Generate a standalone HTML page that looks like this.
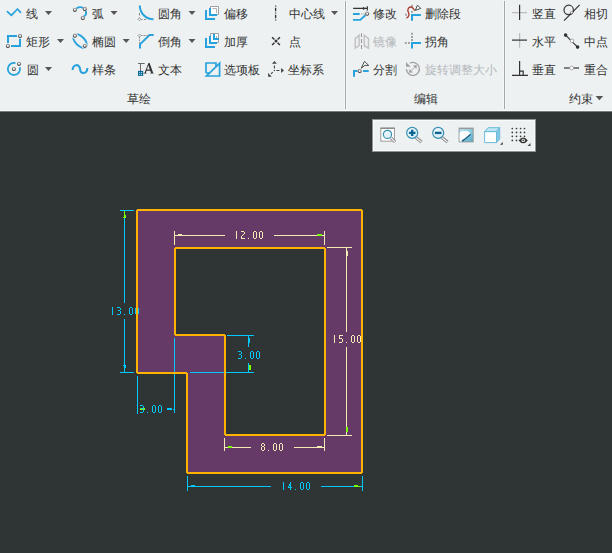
<!DOCTYPE html>
<html><head><meta charset="utf-8"><style>
html,body{margin:0;padding:0;width:612px;height:553px;overflow:hidden;background:#2f3535}
#rib{position:absolute;left:0;top:0;width:612px;height:111px;background:#edf1f2}
.t{position:absolute;font-family:"Liberation Sans",sans-serif;font-size:12px;line-height:16px;white-space:nowrap}
svg{position:absolute;left:0;top:0}
</style></head><body>
<div id="rib"></div>
<svg width="612" height="553" viewBox="0 0 612 553">
<rect x="0" y="110" width="612" height="1" fill="#f7f9f9"/>
<rect x="0" y="111" width="612" height="1" fill="#767b7c"/>
<rect x="344" y="1" width="3" height="108" fill="#f5f7f8"/><rect x="345" y="1" width="1" height="108" fill="#a4a8aa"/>
<rect x="503" y="1" width="3" height="108" fill="#f5f7f8"/><rect x="504" y="1" width="1" height="108" fill="#a4a8aa"/>
<path d="M45 11h7l-3.5 4z" fill="#555"/><path d="M110.5 11h7l-3.5 4z" fill="#555"/><path d="M188.5 11h7l-3.5 4z" fill="#555"/><path d="M331 11h7l-3.5 4z" fill="#555"/><path d="M57 39h7l-3.5 4z" fill="#555"/><path d="M122.7 39h7l-3.5 4z" fill="#555"/><path d="M188.5 39h7l-3.5 4z" fill="#555"/><path d="M45 67h7l-3.5 4z" fill="#555"/><path d="M595.6 95.9h7.6l-3.8 4.4z" fill="#555"/>

<defs>
<radialGradient id="nd" cx="0.45" cy="0.4" r="0.6"><stop offset="0.3" stop-color="#ffffff"/><stop offset="0.62" stop-color="#c4c4c4"/><stop offset="1" stop-color="#3c3c3c"/></radialGradient>
<linearGradient id="ndr" x1="0" y1="0" x2="0" y2="1"><stop offset="0" stop-color="#a0a0a0"/><stop offset="1" stop-color="#3a3a3a"/></linearGradient>
<linearGradient id="rg" x1="0" y1="0" x2="1" y2="1"><stop offset="0" stop-color="#bfeaf8"/><stop offset="1" stop-color="#58abc8"/></linearGradient>
<linearGradient id="lens" x1="0" y1="0" x2="1" y2="1"><stop offset="0" stop-color="#f4fbfe"/><stop offset="1" stop-color="#cfeaf5"/></linearGradient>
</defs>
<!-- line -->
<polyline points="7.4,11.6 11.4,15.4 17.4,9 20.5,12.3" fill="none" stroke="#28a2dc" stroke-width="1.7" stroke-linecap="round" stroke-linejoin="round"/>
<!-- rect -->
<path d="M7 36H17M8 35V43M20 38.7V47M11 46H21" fill="none" stroke="#28a2dc" stroke-width="2"/>
<circle cx="20" cy="35.9" r="1.55" fill="#fafafa" stroke="url(#ndr)" stroke-width="1.1"/>
<circle cx="7.9" cy="45.9" r="1.55" fill="#fafafa" stroke="url(#ndr)" stroke-width="1.1"/>
<!-- circle -->
<path d="M19.79 67.32A6.1 6.1 0 1 1 15.48 63.01" fill="none" stroke="#28a2dc" stroke-width="1.8"/>
<circle cx="13.9" cy="68.9" r="1.55" fill="#fafafa" stroke="url(#ndr)" stroke-width="1.1"/>
<circle cx="19" cy="63.8" r="1.55" fill="#fafafa" stroke="url(#ndr)" stroke-width="1.1"/>
<!-- arc -->
<path d="M76.5 8.4Q80 6 83.2 8M85.6 10.8Q87.2 14.5 83.8 16.5" fill="none" stroke="#28a2dc" stroke-width="1.8"/>
<circle cx="74.9" cy="9.8" r="1.55" fill="#fafafa" stroke="url(#ndr)" stroke-width="1.1"/>
<circle cx="84.8" cy="8.9" r="1.55" fill="#fafafa" stroke="url(#ndr)" stroke-width="1.1"/>
<circle cx="82.8" cy="17.9" r="1.55" fill="#fafafa" stroke="url(#ndr)" stroke-width="1.1"/>
<!-- ellipse -->
<ellipse cx="80" cy="41" rx="8.6" ry="4.6" transform="rotate(45 80 41)" fill="none" stroke="#28a2dc" stroke-width="1.8"/>
<circle cx="74.9" cy="35.7" r="2.9" fill="#edf1f2"/>
<circle cx="84.8" cy="45.8" r="2.9" fill="#edf1f2"/>
<circle cx="74.9" cy="35.7" r="1.55" fill="#fafafa" stroke="url(#ndr)" stroke-width="1.1"/>
<circle cx="84.8" cy="45.8" r="1.55" fill="#fafafa" stroke="url(#ndr)" stroke-width="1.1"/>
<!-- spline -->
<path d="M72.6 70C73 64 79.5 63.5 80 69C80.5 74.5 87 74.5 87.4 68" fill="none" stroke="#28a2dc" stroke-width="2.1"/>
<!-- fillet -->
<path d="M139.8 5.4A13.7 13.9 0 0 0 153.5 19.3" fill="none" stroke="#28a2dc" stroke-width="2"/>
<path d="M139.5 13V15.5M139.5 17V17.6M141 19.5H142.5M144 19.5H146" fill="none" stroke="#8a8a8a" stroke-width="1"/>
<path d="M139.5 17.8l1.5 1.5-1.5 1.5-1.5-1.5z" fill="none" stroke="#8a8a8a" stroke-width="0.8"/>
<!-- chamfer -->
<path d="M140 48.5V44.3L149.5 35H153.7" fill="none" stroke="#28a2dc" stroke-width="2"/>
<path d="M141 35.5H142.5M143.5 35.5H145.5M146.5 35.5H148.5M139.5 37V38.5M139.5 39.5V41M139.5 42V43.5" fill="none" stroke="#8a8a8a" stroke-width="1"/>
<path d="M139.5 34l1.5 1.5-1.5 1.5-1.5-1.5z" fill="none" stroke="#8a8a8a" stroke-width="0.8"/>
<!-- text icon -->
<path d="M138 63.5H144.7M140.5 63.5V71" stroke="#6a6a6a" stroke-width="1" fill="none"/>
<path fill-rule="evenodd" fill="#333" d="M143.6 73.5H146.6V72.9L145.9 72.7L146.5 70.7H150.3L151 72.7L150.3 72.9V73.5H153.6V72.9L153.1 72.7L149.6 63H148.4L144.6 72.7L143.6 72.9Z M146.9 69.5H149.8L148.3 65.3Z"/>
<rect x="138" y="70.9" width="5.2" height="5" fill="#0b6a96"/>
<rect x="139.2" y="72.1" width="1" height="1" fill="#bfe6f7"/><rect x="141" y="72.1" width="1" height="1" fill="#bfe6f7"/>
<rect x="139.2" y="73.9" width="1" height="1" fill="#bfe6f7"/><rect x="141" y="73.9" width="1" height="1" fill="#bfe6f7"/>
<!-- offset -->
<path d="M210.5 6.5H218.5V14.5H210.5Z" fill="#fff" stroke="#a0a0a0" stroke-width="1"/><path d="M212.5 8.5H216.5V13" fill="none" stroke="#b0b0b0" stroke-width="1"/>
<path d="M206 10V19H215M210 8V15H217" fill="none" stroke="#28a2dc" stroke-width="2"/>
<!-- thicken -->
<path d="M210.5 33.5H218.5V42.5H210.5Z" fill="#fff" stroke="#a0a0a0" stroke-width="1"/><path d="M216.5 36V40" fill="none" stroke="#b0b0b0" stroke-width="1"/>
<path d="M206 38V47H215M210 36V43H217M214 34V39H219" fill="none" stroke="#28a2dc" stroke-width="2"/>
<!-- palette -->
<path d="M206 73V63H216V66.5M206 73H210.3" fill="none" stroke="#28a2dc" stroke-width="1.7"/>
<path d="M219.6 63.3V76H206.5Z" fill="none" stroke="#28a2dc" stroke-width="1.7" stroke-linejoin="miter"/>
<!-- centerline -->
<path d="M275.6 5.5V6.6M275.6 7.7V11.2M275.6 12.5V13.6M275.6 14.7V18.2M275.6 19.5V20.6" stroke="#333" stroke-width="1.3" fill="none"/>
<!-- point -->
<path d="M272.1 37.2l2.3 2.3M279.9 37.2l-2.3 2.3M272.1 45l2.3-2.3M279.9 45l-2.3-2.3" stroke="#333" stroke-width="1.5"/>
<circle cx="276" cy="41.1" r="1.5" fill="#333"/>
<!-- csys -->
<path d="M274.4 65.4V68.4M276.4 70.5H279.4M272.7 72.1L271 73.8" stroke="#444" stroke-width="1.1" fill="none"/>
<circle cx="274.4" cy="70.5" r="0.7" fill="#444"/>
<path d="M274.4 61L272 63.8H276.9Z M284 70.5L281.1 68V72.9Z M268.1 73V76.7H271.8Z" fill="#444"/>
<!-- modify -->
<path d="M353.2 8.4H367.7M367.3 6.2V10.6M363.6 7V9.8" stroke="#333" stroke-width="1.2" fill="none"/>
<path d="M353 14H359.7M353 19.9H360.3L365.4 15.2" stroke="#28a2dc" stroke-width="1.9" fill="none"/>
<path d="M361 14H361.8M362.6 14H363.4M364.2 14H365" stroke="#999" stroke-width="1"/>
<circle cx="367.1" cy="13.7" r="1.55" fill="#fafafa" stroke="url(#ndr)" stroke-width="1.1"/>
<!-- delete seg -->
<rect x="405" y="13.7" width="2" height="2" fill="#aaa"/><rect x="411" y="4.8" width="2" height="2" fill="#aaa"/><rect x="411" y="10.9" width="2" height="2" fill="#aaa"/>
<path d="M406.4 18.3C408.5 17 409.8 15.5 408.5 12.5C407 10 408.2 7 411 7C413 7 413.5 9.5 414.7 10.4" stroke="#a8382c" stroke-width="1.3" fill="none"/>
<path d="M417.5 5.2L420.7 8.4 415.3 10.4Z" fill="#fff" stroke="#333" stroke-width="0.9" stroke-linejoin="round"/>
<path d="M412 20.7V15H420.9" stroke="#28a2dc" stroke-width="2" fill="none"/>
<!-- mirror (disabled) -->
<path d="M355.2 38.6V48.1L359.1 45.7V35.2Z M368.5 38.6V48.1L364.3 45.7V35.2Z" fill="none" stroke="#c2c3c4" stroke-width="1.5"/>
<path d="M361.5 33.2V37M361.5 39V43M361.5 45V49" stroke="#9c9c9c" stroke-width="1.1"/>
<!-- corner -->
<g fill="#a4a4a4"><rect x="411" y="32.8" width="2" height="2"/><rect x="411" y="36" width="2" height="2"/><rect x="411" y="39" width="2" height="2"/><rect x="404.8" y="42" width="2" height="2"/><rect x="408" y="42" width="2" height="2"/></g>
<path d="M412 48.5V43H421" stroke="#28a2dc" stroke-width="2" fill="none"/>
<!-- split -->
<path d="M354 76.7V71H357.5M363.1 71H368.7" stroke="#28a2dc" stroke-width="2" fill="none"/>
<circle cx="359.7" cy="70.9" r="1.55" fill="#fafafa" stroke="url(#ndr)" stroke-width="1.1"/>
<path d="M364.5 61.4L368.7 65.4 365 65.3 361.3 68.1Z" fill="#fff" stroke="#333" stroke-width="0.9" stroke-linejoin="round"/>
<!-- rotate resize (disabled) -->
<path d="M406.4 69.1A6.5 6.5 0 1 0 409.8 63.2" fill="none" stroke="#a2a2a2" stroke-width="1.3"/>
<path d="M406 62V66.8H410.8Z" fill="#a2a2a2"/>
<path d="M410.5 71.3L415.3 66.5" stroke="#a2a2a2" stroke-width="1.1" stroke-dasharray="1 0.8"/>
<path d="M409 72.8L409.4 69 413 72.4Z M416.8 65L413 65.4 416.4 69Z" fill="#a2a2a2"/>
<!-- vertical -->
<path d="M512 12.6H527" stroke="#b9bbbc" stroke-width="1.2"/>
<path d="M519.6 4.8V20" stroke="#333" stroke-width="1.2"/>
<!-- horizontal -->
<path d="M519.6 33V47.8" stroke="#b9bbbc" stroke-width="1.2"/>
<path d="M512 40.1H527" stroke="#333" stroke-width="1.2"/>
<!-- perpendicular -->
<path d="M519.6 61V75.3M512 75.3H528M519.6 71.1H523.2V75.3" stroke="#333" stroke-width="1.2" fill="none"/>
<!-- tangent -->
<circle cx="568.7" cy="9.9" r="4.7" fill="none" stroke="#333" stroke-width="1.2"/>
<path d="M564 20.6L579.7 4.8" stroke="#333" stroke-width="1.2"/>
<circle cx="571.6" cy="12.6" r="1.3" fill="#fafafa" stroke="url(#ndr)" stroke-width="0.9"/>
<!-- midpoint -->
<path d="M565.6 35.1L577.6 47.1" stroke="#333" stroke-width="1.2"/>
<circle cx="565.6" cy="35.1" r="1.8" fill="#333"/>
<circle cx="577.6" cy="47.1" r="1.8" fill="#333"/>
<circle cx="572" cy="40.8" r="1.8" fill="#fff" stroke="#9a9a9a" stroke-width="0.8"/>
<!-- coincident -->
<path d="M564 68H579" stroke="#333" stroke-width="1.2"/>
<circle cx="571.6" cy="68" r="1.9" fill="#fff" stroke="#9a9a9a" stroke-width="0.8"/>


<rect x="372" y="119" width="164" height="33" fill="#8c9394"/>
<rect x="373" y="120" width="162" height="31" fill="#f8fafa"/>
<rect x="374" y="121" width="160" height="29" fill="#edf1f2"/>
<!-- zoom fit -->
<rect x="380.3" y="127.4" width="14.6" height="14.3" fill="#fff"/>
<path d="M380.8 141.7V128.4H394.4V141.7" fill="none" stroke="#9a9a9a" stroke-width="1"/>
<path d="M380.3 128.2H394.9" stroke="#8c8c8c" stroke-width="1.6"/>
<path d="M380.8 141.2H392" stroke="#9a9a9a" stroke-width="1"/>
<path d="M391 138L395.1 142" stroke="#777" stroke-width="3"/>
<path d="M391 138L395.1 142" stroke="#f4f4f4" stroke-width="1.3"/>
<circle cx="387.5" cy="134.4" r="4.1" fill="url(#lens)" stroke="#3b8fb2" stroke-width="1.2"/>
<!-- zoom in -->
<path d="M415.9 137.4L421.5 142.2" stroke="#777" stroke-width="3"/>
<path d="M415.9 137.4L421.5 142.2" stroke="#f4f4f4" stroke-width="1.3"/>
<circle cx="412.2" cy="132.9" r="5.5" fill="url(#lens)" stroke="#3b8fb2" stroke-width="1.2"/>
<path d="M408.9 132.9H415.5M412.2 129.8V136" stroke="#0c6592" stroke-width="2.4"/>
<!-- zoom out -->
<path d="M441.9 137.4L447.5 142.2" stroke="#777" stroke-width="3"/>
<path d="M441.9 137.4L447.5 142.2" stroke="#f4f4f4" stroke-width="1.3"/>
<circle cx="438.2" cy="132.9" r="5.5" fill="url(#lens)" stroke="#3b8fb2" stroke-width="1.2"/>
<path d="M434.9 132.9H441.5" stroke="#0c6592" stroke-width="2.4"/>
<!-- repaint -->
<rect x="458.6" y="127.6" width="15.1" height="14.8" fill="#9a9a9a"/>
<rect x="459.6" y="129.2" width="13.1" height="12.2" fill="url(#rg)"/>
<path d="M459.6 141.4V133C461 131 465 130.5 468 131.5C469.5 132 470 132.5 470.3 133.5L463 141.4Z" fill="#fff"/>
<path d="M463 140.8L470.7 134.2" stroke="#145f82" stroke-width="1.2"/>
<path d="M461.6 141.4C461.8 139.8 463 139.3 464.5 139.6L463.3 141.4Z" fill="#145f82"/>
<!-- cube -->
<path d="M484.6 131.6H496.5V142.6H484.6Z" fill="#fff" stroke="#6bbbdc" stroke-width="1"/>
<path d="M484.6 131.6L488.2 127.7H499.7L496.5 131.6Z" fill="#bfe5f4" stroke="#6bbbdc" stroke-width="1" stroke-linejoin="round"/>
<path d="M496.5 131.6L499.7 127.7V138.9L496.5 142.6Z" fill="#86c9e4" stroke="#6bbbdc" stroke-width="1" stroke-linejoin="round"/>
<path d="M502.8 142V144.8H500Z" fill="#444"/>
<!-- grid eye -->
<g fill="#3a3a3a">
<circle cx="512.3" cy="128.5" r="0.85"/><circle cx="516.5" cy="128.5" r="0.85"/><circle cx="520.6" cy="128.5" r="0.85"/><circle cx="524.5" cy="128.5" r="0.85"/>
<circle cx="512.3" cy="132.4" r="0.85"/><circle cx="516.5" cy="132.4" r="0.85"/><circle cx="520.6" cy="132.4" r="0.85"/><circle cx="524.5" cy="132.4" r="0.85"/>
<circle cx="512.3" cy="136.3" r="0.85"/><circle cx="516.5" cy="136.3" r="0.85"/><circle cx="520.6" cy="136.3" r="0.85"/><circle cx="524.5" cy="136.3" r="0.85"/>
<circle cx="512.3" cy="140.4" r="0.85"/><circle cx="516.5" cy="140.4" r="0.85"/>
</g>
<path d="M518.6 140.4Q523.2 134.6 527.8 140.4Q523.2 146.2 518.6 140.4Z" fill="#333"/>
<circle cx="523.2" cy="140.4" r="1.7" fill="#fff"/>
<circle cx="523.2" cy="140.4" r="0.8" fill="#333"/>
<path d="M530.5 143V146H527.5Z" fill="#444"/>

<g shape-rendering="crispEdges">
<path fill="#663a66" fill-rule="evenodd" d="M137 210H362V473H187V373H137Z M175 248H325V435H225V335H175Z"/>
<rect x="120" y="210" width="14" height="1" fill="#00c8ff"/>
<rect x="120" y="372" width="14" height="1" fill="#00c8ff"/>
<rect x="124" y="211" width="1" height="92" fill="#00c8ff"/>
<rect x="124" y="319" width="1" height="53" fill="#00c8ff"/>
<rect x="124" y="211" width="1" height="7" fill="#78ff00"/>
<rect x="125" y="215" width="1" height="3" fill="#78ff00"/>
<rect x="123" y="217" width="1" height="1" fill="#78ff00"/>
<rect x="125" y="365" width="1" height="3" fill="#00c8ff"/><rect x="123" y="365" width="1" height="1" fill="#00c8ff"/>
<rect x="174" y="231" width="1" height="14" fill="#f5ebb4"/>
<rect x="324" y="231" width="1" height="14" fill="#f5ebb4"/>
<rect x="174" y="235" width="51" height="1" fill="#f5ebb4"/>
<rect x="274" y="235" width="51" height="1" fill="#f5ebb4"/>
<rect x="178" y="234" width="4" height="1" fill="#f5ebb4"/>
<rect x="317" y="234" width="5" height="2" fill="#78ff00"/>
<rect x="327" y="247" width="25" height="1" fill="#f5ebb4"/>
<rect x="327" y="435" width="25" height="1" fill="#f5ebb4"/>
<rect x="346" y="247" width="1" height="85" fill="#f5ebb4"/>
<rect x="346" y="347" width="1" height="88" fill="#f5ebb4"/>
<rect x="347" y="251" width="1" height="5" fill="#f5ebb4"/>
<rect x="346" y="427" width="2" height="5" fill="#78ff00"/>
<rect x="227" y="335" width="27" height="1" fill="#00c8ff"/>
<rect x="190" y="372" width="64" height="1" fill="#00c8ff"/>
<rect x="248" y="335" width="1" height="12" fill="#00c8ff"/>
<rect x="248" y="363" width="1" height="10" fill="#00c8ff"/>
<rect x="249" y="338" width="1" height="5" fill="#00c8ff"/>
<rect x="249" y="365" width="2" height="5" fill="#78ff00"/>
<rect x="137" y="376" width="1" height="38" fill="#00c8ff"/>
<rect x="174" y="338" width="1" height="75" fill="#00c8ff"/>
<rect x="167" y="408" width="5" height="2" fill="#00c8ff"/>
<rect x="173" y="409" width="1" height="1" fill="#00c8ff"/>
<rect x="140" y="408" width="5" height="2" fill="#78ff00"/>
<rect x="224" y="438" width="1" height="13" fill="#f5ebb4"/>
<rect x="324" y="438" width="1" height="13" fill="#f5ebb4"/>
<rect x="224" y="447" width="27" height="1" fill="#f5ebb4"/>
<rect x="294" y="447" width="31" height="1" fill="#f5ebb4"/>
<rect x="228" y="446" width="4" height="2" fill="#78ff00"/>
<rect x="317" y="446" width="5" height="1" fill="#f5ebb4"/>
<rect x="187" y="476" width="1" height="15" fill="#00c8ff"/>
<rect x="362" y="476" width="1" height="15" fill="#00c8ff"/>
<rect x="187" y="486" width="84" height="1" fill="#00c8ff"/>
<rect x="321" y="486" width="42" height="1" fill="#00c8ff"/>
<rect x="191" y="485" width="4" height="1" fill="#00c8ff"/>
<rect x="354" y="485" width="4" height="1" fill="#78ff00"/><rect x="354" y="486" width="6" height="1" fill="#78ff00"/>
<path fill="#00c8ff" d="M112 307h1v1h-1zM112 308h1v1h-1zM112 309h1v1h-1zM112 310h1v1h-1zM112 311h1v1h-1zM112 312h1v1h-1zM112 313h1v1h-1zM112 314h1v1h-1zM117 307h3v1h-3zM120 308h1v1h-1zM120 309h1v1h-1zM118 310h2v1h-2zM120 311h1v1h-1zM120 312h1v1h-1zM120 313h1v1h-1zM117 314h3v1h-3zM124 314h1v1h-1zM130 307h2v1h-2zM129 308h1v1h-1zM132 308h1v1h-1zM129 309h1v1h-1zM132 309h1v1h-1zM129 310h1v1h-1zM132 310h1v1h-1zM129 311h1v1h-1zM132 311h1v1h-1zM129 312h1v1h-1zM132 312h1v1h-1zM129 313h1v1h-1zM132 313h1v1h-1zM130 314h2v1h-2zM136 307h2v1h-2zM135 308h1v1h-1zM138 308h1v1h-1zM135 309h1v1h-1zM138 309h1v1h-1zM135 310h1v1h-1zM138 310h1v1h-1zM135 311h1v1h-1zM138 311h1v1h-1zM135 312h1v1h-1zM138 312h1v1h-1zM135 313h1v1h-1zM138 313h1v1h-1zM136 314h2v1h-2z"/>
<path fill="#f5ebb4" d="M236 231h1v1h-1zM236 232h1v1h-1zM236 233h1v1h-1zM236 234h1v1h-1zM236 235h1v1h-1zM236 236h1v1h-1zM236 237h1v1h-1zM236 238h1v1h-1zM241 231h3v1h-3zM244 232h1v1h-1zM244 233h1v1h-1zM243 234h1v1h-1zM242 235h1v1h-1zM241 236h1v1h-1zM241 237h1v1h-1zM241 238h4v1h-4zM248 238h1v1h-1zM254 231h2v1h-2zM253 232h1v1h-1zM256 232h1v1h-1zM253 233h1v1h-1zM256 233h1v1h-1zM253 234h1v1h-1zM256 234h1v1h-1zM253 235h1v1h-1zM256 235h1v1h-1zM253 236h1v1h-1zM256 236h1v1h-1zM253 237h1v1h-1zM256 237h1v1h-1zM254 238h2v1h-2zM260 231h2v1h-2zM259 232h1v1h-1zM262 232h1v1h-1zM259 233h1v1h-1zM262 233h1v1h-1zM259 234h1v1h-1zM262 234h1v1h-1zM259 235h1v1h-1zM262 235h1v1h-1zM259 236h1v1h-1zM262 236h1v1h-1zM259 237h1v1h-1zM262 237h1v1h-1zM260 238h2v1h-2z"/>
<path fill="#f5ebb4" d="M334 335h1v1h-1zM334 336h1v1h-1zM334 337h1v1h-1zM334 338h1v1h-1zM334 339h1v1h-1zM334 340h1v1h-1zM334 341h1v1h-1zM334 342h1v1h-1zM339 335h4v1h-4zM339 336h1v1h-1zM339 337h1v1h-1zM339 338h3v1h-3zM342 339h1v1h-1zM342 340h1v1h-1zM342 341h1v1h-1zM339 342h3v1h-3zM346 342h1v1h-1zM352 335h2v1h-2zM351 336h1v1h-1zM354 336h1v1h-1zM351 337h1v1h-1zM354 337h1v1h-1zM351 338h1v1h-1zM354 338h1v1h-1zM351 339h1v1h-1zM354 339h1v1h-1zM351 340h1v1h-1zM354 340h1v1h-1zM351 341h1v1h-1zM354 341h1v1h-1zM352 342h2v1h-2zM358 335h2v1h-2zM357 336h1v1h-1zM360 336h1v1h-1zM357 337h1v1h-1zM360 337h1v1h-1zM357 338h1v1h-1zM360 338h1v1h-1zM357 339h1v1h-1zM360 339h1v1h-1zM357 340h1v1h-1zM360 340h1v1h-1zM357 341h1v1h-1zM360 341h1v1h-1zM358 342h2v1h-2z"/>
<path fill="#00c8ff" d="M238 351h3v1h-3zM241 352h1v1h-1zM241 353h1v1h-1zM239 354h2v1h-2zM241 355h1v1h-1zM241 356h1v1h-1zM241 357h1v1h-1zM238 358h3v1h-3zM245 358h1v1h-1zM251 351h2v1h-2zM250 352h1v1h-1zM253 352h1v1h-1zM250 353h1v1h-1zM253 353h1v1h-1zM250 354h1v1h-1zM253 354h1v1h-1zM250 355h1v1h-1zM253 355h1v1h-1zM250 356h1v1h-1zM253 356h1v1h-1zM250 357h1v1h-1zM253 357h1v1h-1zM251 358h2v1h-2zM257 351h2v1h-2zM256 352h1v1h-1zM259 352h1v1h-1zM256 353h1v1h-1zM259 353h1v1h-1zM256 354h1v1h-1zM259 354h1v1h-1zM256 355h1v1h-1zM259 355h1v1h-1zM256 356h1v1h-1zM259 356h1v1h-1zM256 357h1v1h-1zM259 357h1v1h-1zM257 358h2v1h-2z"/>
<path fill="#00c8ff" d="M140 405h3v1h-3zM143 406h1v1h-1zM143 407h1v1h-1zM141 408h2v1h-2zM143 409h1v1h-1zM143 410h1v1h-1zM143 411h1v1h-1zM140 412h3v1h-3zM147 412h1v1h-1zM153 405h2v1h-2zM152 406h1v1h-1zM155 406h1v1h-1zM152 407h1v1h-1zM155 407h1v1h-1zM152 408h1v1h-1zM155 408h1v1h-1zM152 409h1v1h-1zM155 409h1v1h-1zM152 410h1v1h-1zM155 410h1v1h-1zM152 411h1v1h-1zM155 411h1v1h-1zM153 412h2v1h-2zM159 405h2v1h-2zM158 406h1v1h-1zM161 406h1v1h-1zM158 407h1v1h-1zM161 407h1v1h-1zM158 408h1v1h-1zM161 408h1v1h-1zM158 409h1v1h-1zM161 409h1v1h-1zM158 410h1v1h-1zM161 410h1v1h-1zM158 411h1v1h-1zM161 411h1v1h-1zM159 412h2v1h-2z"/>
<path fill="#f5ebb4" d="M262 443h2v1h-2zM261 444h1v1h-1zM264 444h1v1h-1zM261 445h1v1h-1zM264 445h1v1h-1zM262 446h2v1h-2zM261 447h1v1h-1zM264 447h1v1h-1zM261 448h1v1h-1zM264 448h1v1h-1zM261 449h1v1h-1zM264 449h1v1h-1zM262 450h2v1h-2zM268 450h1v1h-1zM274 443h2v1h-2zM273 444h1v1h-1zM276 444h1v1h-1zM273 445h1v1h-1zM276 445h1v1h-1zM273 446h1v1h-1zM276 446h1v1h-1zM273 447h1v1h-1zM276 447h1v1h-1zM273 448h1v1h-1zM276 448h1v1h-1zM273 449h1v1h-1zM276 449h1v1h-1zM274 450h2v1h-2zM280 443h2v1h-2zM279 444h1v1h-1zM282 444h1v1h-1zM279 445h1v1h-1zM282 445h1v1h-1zM279 446h1v1h-1zM282 446h1v1h-1zM279 447h1v1h-1zM282 447h1v1h-1zM279 448h1v1h-1zM282 448h1v1h-1zM279 449h1v1h-1zM282 449h1v1h-1zM280 450h2v1h-2z"/>
<path fill="#00c8ff" d="M283 482h1v1h-1zM283 483h1v1h-1zM283 484h1v1h-1zM283 485h1v1h-1zM283 486h1v1h-1zM283 487h1v1h-1zM283 488h1v1h-1zM283 489h1v1h-1zM290 482h1v1h-1zM290 483h1v1h-1zM289 484h2v1h-2zM289 485h2v1h-2zM288 486h1v1h-1zM290 486h1v1h-1zM288 487h4v1h-4zM290 488h1v1h-1zM290 489h1v1h-1zM295 489h1v1h-1zM301 482h2v1h-2zM300 483h1v1h-1zM303 483h1v1h-1zM300 484h1v1h-1zM303 484h1v1h-1zM300 485h1v1h-1zM303 485h1v1h-1zM300 486h1v1h-1zM303 486h1v1h-1zM300 487h1v1h-1zM303 487h1v1h-1zM300 488h1v1h-1zM303 488h1v1h-1zM301 489h2v1h-2zM307 482h2v1h-2zM306 483h1v1h-1zM309 483h1v1h-1zM306 484h1v1h-1zM309 484h1v1h-1zM306 485h1v1h-1zM309 485h1v1h-1zM306 486h1v1h-1zM309 486h1v1h-1zM306 487h1v1h-1zM309 487h1v1h-1zM306 488h1v1h-1zM309 488h1v1h-1zM307 489h2v1h-2z"/>
<path fill="none" stroke="#ffb200" stroke-width="2" d="M137 210H362M362 210V473M362 473H187M187 473V373M187 373H137M137 373V210M175 248H325M325 248V435M325 435H225M225 435V335M225 335H175M175 335V248"/>
</g>
</svg>
<div class="t" style="left:26px;top:6px;color:#333333">线</div><div class="t" style="left:92px;top:6px;color:#333333">弧</div><div class="t" style="left:158px;top:6px;color:#333333">圆角</div><div class="t" style="left:224px;top:6px;color:#333333">偏移</div><div class="t" style="left:288.5px;top:6px;color:#333333">中心线</div><div class="t" style="left:373px;top:6px;color:#333333">修改</div><div class="t" style="left:425px;top:6px;color:#333333">删除段</div><div class="t" style="left:532px;top:6px;color:#333333">竖直</div><div class="t" style="left:584px;top:6px;color:#333333">相切</div><div class="t" style="left:26px;top:34px;color:#333333">矩形</div><div class="t" style="left:92px;top:34px;color:#333333">椭圆</div><div class="t" style="left:158px;top:34px;color:#333333">倒角</div><div class="t" style="left:224px;top:34px;color:#333333">加厚</div><div class="t" style="left:288.5px;top:34px;color:#333333">点</div><div class="t" style="left:373px;top:34px;color:#b4b8bb">镜像</div><div class="t" style="left:425px;top:34px;color:#333333">拐角</div><div class="t" style="left:532px;top:34px;color:#333333">水平</div><div class="t" style="left:584px;top:34px;color:#333333">中点</div><div class="t" style="left:26.5px;top:62px;color:#333333">圆</div><div class="t" style="left:92px;top:62px;color:#333333">样条</div><div class="t" style="left:158px;top:62px;color:#333333">文本</div><div class="t" style="left:224px;top:62px;color:#333333">选项板</div><div class="t" style="left:288px;top:62px;color:#333333">坐标系</div><div class="t" style="left:373px;top:62px;color:#333333">分割</div><div class="t" style="left:425px;top:62px;color:#b4b8bb">旋转调整大小</div><div class="t" style="left:532px;top:62px;color:#333333">垂直</div><div class="t" style="left:584px;top:62px;color:#333333">重合</div><div class="t" style="left:127px;top:91px;color:#333333">草绘</div><div class="t" style="left:414px;top:91px;color:#333333">编辑</div><div class="t" style="left:569px;top:91px;color:#333333">约束</div>
</body></html>
